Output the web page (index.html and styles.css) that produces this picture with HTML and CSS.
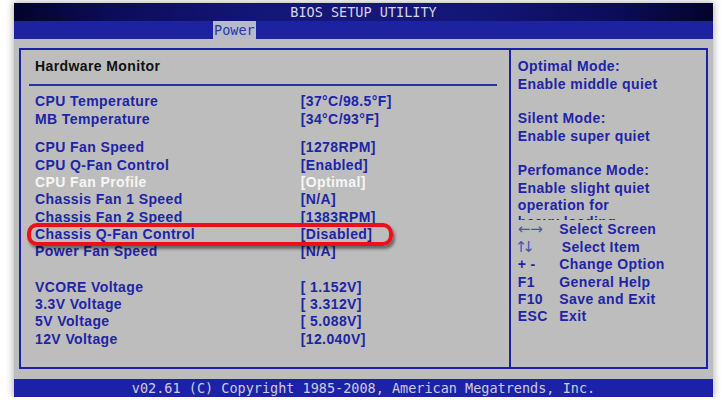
FILE: index.html
```html
<!DOCTYPE html>
<html>
<head>
<meta charset="utf-8">
<link rel="stylesheet" href="styles.css">
</head>
<body>
<div class="frame">
  <div class="titlebar">BIOS SETUP UTILITY</div>
  <div class="tabbar"><div class="tab">Power</div></div>
  <div class="body">
    <div class="panels">
      <div class="left">
        <div class="heading">Hardware Monitor</div>
        <div class="sep"></div>
        <div class="group g1">
          <div class="row"><span>CPU Temperature</span><span>[37°C/98.5°F]</span></div>
          <div class="row"><span>MB Temperature</span><span>[34°C/93°F]</span></div>
        </div>
        <div class="group g2">
          <div class="row"><span>CPU Fan Speed</span><span>[1278RPM]</span></div>
          <div class="row"><span>CPU Q-Fan Control</span><span>[Enabled]</span></div>
          <div class="row sel"><span>CPU Fan Profile</span><span>[Optimal]</span></div>
          <div class="row"><span>Chassis Fan 1 Speed</span><span>[N/A]</span></div>
          <div class="row"><span>Chassis Fan 2 Speed</span><span>[1383RPM]</span></div>
          <div class="row"><span>Chassis Q-Fan Control</span><span>[Disabled]</span></div>
          <div class="row"><span>Power Fan Speed</span><span>[N/A]</span></div>
        </div>
        <div class="group g3">
          <div class="row"><span>VCORE Voltage</span><span>[ 1.152V]</span></div>
          <div class="row"><span>3.3V Voltage</span><span>[ 3.312V]</span></div>
          <div class="row"><span>5V Voltage</span><span>[ 5.088V]</span></div>
          <div class="row"><span>12V Voltage</span><span>[12.040V]</span></div>
        </div>
      </div>
      <div class="right">
        <div class="desc">
          <div class="line">Optimal Mode:</div>
          <div class="line">Enable middle quiet</div>
          <div class="line"></div>
          <div class="line">Silent Mode:</div>
          <div class="line">Enable super quiet</div>
          <div class="line"></div>
          <div class="line">Perfomance Mode:</div>
          <div class="line">Enable slight quiet</div>
          <div class="line">operation for</div>
          <div class="line">heavy loading</div>
        </div>
        <div class="keys">
          <span class="arrow lr">←→</span><span>Select Screen</span>
          <span class="arrow ud">↑↓</span><span class="shift">Select Item</span>
          <span>+ -</span><span>Change Option</span>
          <span>F1</span><span>General Help</span>
          <span>F10</span><span>Save and Exit</span>
          <span>ESC</span><span>Exit</span>
        </div>
      </div>
    </div>
  </div>
  <div class="footer">v02.61 (C) Copyright 1985-2008, American Megatrends, Inc.</div>
  <div class="mark"></div>
</div>
</body>
</html>
```

FILE: styles.css
```css
html, body {
  margin: 0;
  padding: 0;
  background: #ffffff;
}

body {
  font-family: "Liberation Sans", Arial, sans-serif;
}

.frame {
  position: relative;
  margin: 3px 0 0 14px;
  width: 699px;
  box-shadow: 0 0 7px 1px rgba(0, 0, 0, 0.3);
}

.titlebar {
  height: 17.5px;
  display: flex;
  align-items: center;
  justify-content: center;
  background: linear-gradient(to right, #03032c 0%, #0c0c5a 14%, #131676 35%, #151878 50%, #131676 65%, #0c0c5a 86%, #03032c 100%);
  font-family: "DejaVu Sans Mono", monospace;
  font-size: 13.5px;
  color: #d6d6e6;
}

.tabbar {
  height: 18px;
  background: #1c22a0;
  padding-left: 198.7px;
  display: flex;
}

.tab {
  width: 43.3px;
  height: 18px;
  line-height: 18px;
  text-align: center;
  background: #b6bacc;
  color: #2a36a0;
  font-family: "DejaVu Sans Mono", monospace;
  font-size: 13.5px;
}

.body {
  background: #bdbdbd;
  padding: 9.5px 5px 10px 5px;
}

.panels {
  display: flex;
  height: 321px;
  box-sizing: border-box;
  border: 2px solid #1c22a8;
  font-size: 14px;
  font-weight: bold;
  letter-spacing: 0.4px;
  color: #1e24a6;
}

.left {
  flex: 0 0 490px;
  box-sizing: border-box;
  border-right: 2px solid #1c22a8;
  padding-top: 8.2px;
}

.heading {
  padding-left: 14px;
  line-height: 17.35px;
  color: #111111;
}

.sep {
  margin: 8.5px 12px 0 8px;
  height: 2px;
  background: #2a30a8;
}

.group {
  padding-left: 14px;
}

.g1 { margin-top: 7.15px; }
.g2 { margin-top: 11.35px; }
.g3 { margin-top: 18.15px; }

.row {
  display: grid;
  grid-template-columns: 265.7px auto;
  line-height: 17.35px;
  white-space: pre;
}

.row.sel {
  color: #f6f6f6;
}

.right {
  flex: 1;
  padding-top: 8.2px;
  padding-left: 6.7px;
}

.desc {
  height: 162.3px;
  overflow: hidden;
}

.line {
  height: 17.35px;
  line-height: 17.35px;
}

.keys {
  margin-top: 1px;
  display: grid;
  grid-template-columns: 41.6px auto;
  line-height: 17.35px;
}

.arrow {
  font-family: "DejaVu Sans", sans-serif;
  font-weight: normal;
  font-size: 15px;
  color: #4a52b0;
  letter-spacing: 0;
  white-space: nowrap;
}

.arrow.ud {
  letter-spacing: -5px;
  margin-left: -3px;
}

.shift {
  padding-left: 2.4px;
}

.footer {
  height: 17.5px;
  display: flex;
  align-items: center;
  justify-content: center;
  background: #1c22a8;
  font-family: "DejaVu Sans Mono", monospace;
  font-size: 13.5px;
  color: #ccccdc;
}

.mark {
  position: absolute;
  left: 13px;
  top: 220px;
  width: 366px;
  height: 23px;
  box-sizing: border-box;
  border: 4px solid #ee1018;
  border-radius: 10px;
  box-shadow: 2px 3px 3px rgba(0, 0, 0, 0.45);
}
```
